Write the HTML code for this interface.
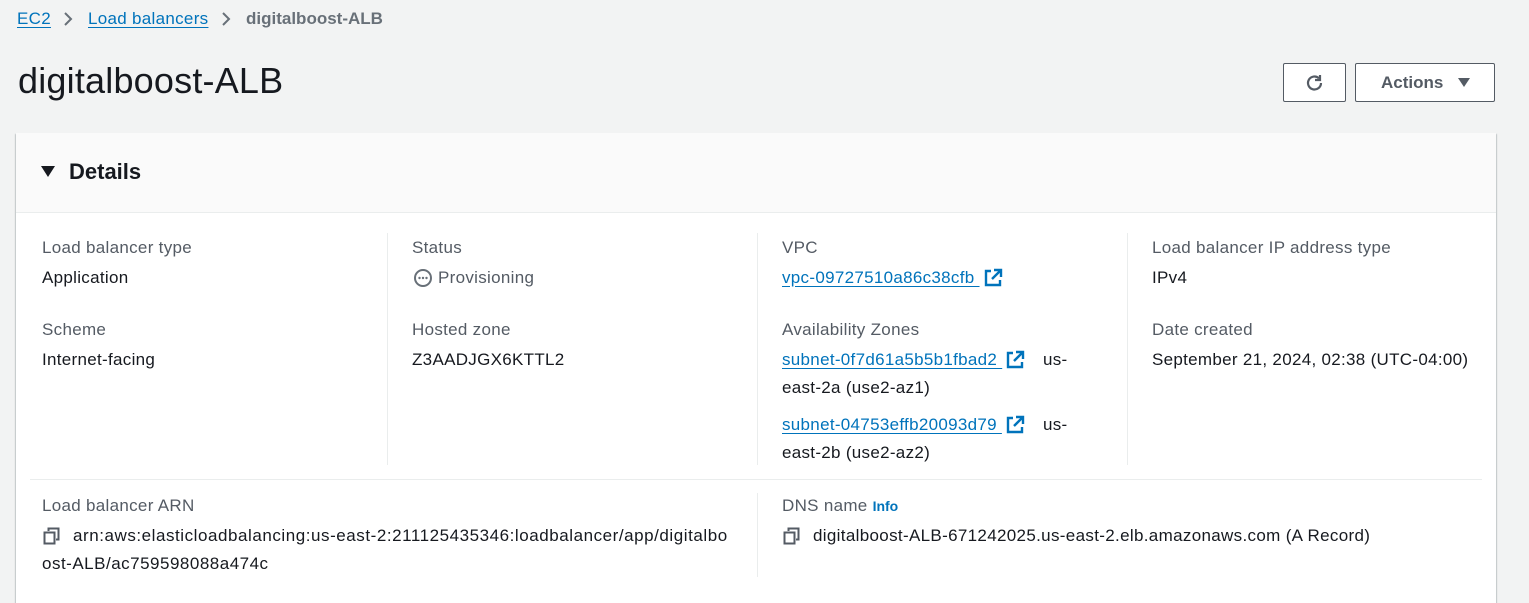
<!DOCTYPE html>
<html><head><meta charset="utf-8"><style>
*{box-sizing:border-box;margin:0;padding:0}
body{width:1529px;height:591px;overflow:hidden;background:#f2f3f3;font-family:"Liberation Sans",sans-serif;color:#16191f;position:relative;font-size:17px;letter-spacing:0.3px}
.a{position:absolute;white-space:nowrap}
.lnk{color:#0073bb;text-decoration:underline;text-underline-offset:3px}
.lbl{color:#545b64}
.vd{position:absolute;width:1px;background:#eaeded}
.btn{position:absolute;border:1px solid #545b64;border-radius:2px;background:#fff}
.ext{display:inline-block;vertical-align:-5px;margin-left:3px}
</style></head><body>
<div class="a" style="left:17px;top:9px"><span class="lnk">EC2</span></div>
<svg class="a" style="left:60px;top:10px" width="16" height="18"><path d="M5 3l6 6-6 6" stroke="#687078" stroke-width="2" fill="none"/></svg>
<div class="a" style="left:88px;top:9px"><span class="lnk">Load balancers</span></div>
<svg class="a" style="left:218px;top:10px" width="16" height="18"><path d="M5 3l6 6-6 6" stroke="#687078" stroke-width="2" fill="none"/></svg>
<div class="a" style="left:246px;top:9px;font-weight:bold;color:#687078;letter-spacing:0">digitalboost-ALB</div>
<div class="a" style="left:18px;top:60px;font-size:36px;letter-spacing:0.2px">digitalboost-ALB</div>
<div class="btn" style="left:1283px;top:63px;width:63px;height:39px"><svg style="position:absolute;left:20px;top:8px" width="22" height="22" viewBox="0 0 22 22"><path d="M17 11a6.5 6.5 0 1 1-2-4.7" stroke="#545b64" stroke-width="2.2" fill="none"/><path d="M16 3v5h-5" stroke="#545b64" stroke-width="2.2" fill="none"/></svg></div>
<div class="btn" style="left:1355px;top:63px;width:140px;height:39px"><span class="a" style="left:25px;top:9px;font-weight:bold;color:#545b64;letter-spacing:0">Actions</span><svg class="a" style="left:102px;top:14px" width="12" height="10"><path d="M0 0h12L6 9z" fill="#545b64"/></svg></div>
<div class="a" style="left:16px;top:133px;width:1480px;height:470px;background:#fff;box-shadow:0 1px 1px rgba(0,28,36,.3),1px 1px 1px rgba(0,28,36,.15),-1px 1px 1px rgba(0,28,36,.15)"></div>
<div class="a" style="left:16px;top:133px;width:1480px;height:80px;background:#fafafa;border-bottom:1px solid #eaeded"></div>
<svg class="a" style="left:41px;top:166px" width="14" height="12"><path d="M0 0h14L7 11z" fill="#16191f"/></svg>
<div class="a" style="left:69px;top:159px;font-size:22px;font-weight:bold;letter-spacing:0">Details</div>
<div class="vd" style="left:387px;top:233px;height:232px"></div>
<div class="vd" style="left:757px;top:233px;height:232px"></div>
<div class="vd" style="left:1127px;top:233px;height:232px"></div>
<div class="a" style="left:30px;top:479px;width:1452px;height:1px;background:#eaeded"></div>
<div class="vd" style="left:757px;top:493px;height:84px"></div>

<div class="a lbl" style="left:42px;top:238px">Load balancer type</div>
<div class="a" style="left:42px;top:268px">Application</div>
<div class="a lbl" style="left:42px;top:320px">Scheme</div>
<div class="a" style="left:42px;top:350px">Internet-facing</div>

<div class="a lbl" style="left:412px;top:238px">Status</div>
<svg class="a" style="left:413px;top:268px" width="20" height="20"><circle cx="10" cy="10" r="8" stroke="#687078" stroke-width="2" fill="none"/><circle cx="6.5" cy="10" r="1.2" fill="#687078"/><circle cx="10" cy="10" r="1.2" fill="#687078"/><circle cx="13.5" cy="10" r="1.2" fill="#687078"/></svg>
<div class="a lbl" style="left:438px;top:268px">Provisioning</div>
<div class="a lbl" style="left:412px;top:320px">Hosted zone</div>
<div class="a" style="left:412px;top:350px">Z3AADJGX6KTTL2</div>

<div class="a lbl" style="left:782px;top:238px">VPC</div>
<div class="a" style="left:782px;top:268px"><span class="lnk">vpc-09727510a86c38cfb&nbsp;</span><svg class="ext" width="20" height="20" viewBox="0 0 20 20"><path d="M8 3H3v14h14v-5M11 2h7v7M18 2l-9 9" stroke="#0073bb" stroke-width="2.4" fill="none"/></svg></div>
<div class="a lbl" style="left:782px;top:320px">Availability Zones</div>
<div class="a" style="left:782px;top:350px"><span class="lnk">subnet-0f7d61a5b5b1fbad2&nbsp;</span><svg class="ext" width="20" height="20" viewBox="0 0 20 20"><path d="M8 3H3v14h14v-5M11 2h7v7M18 2l-9 9" stroke="#0073bb" stroke-width="2.4" fill="none"/></svg></div>
<div class="a" style="left:1043px;top:350px">us-</div>
<div class="a" style="left:782px;top:378px">east-2a (use2-az1)</div>
<div class="a" style="left:782px;top:415px"><span class="lnk">subnet-04753effb20093d79&nbsp;</span><svg class="ext" width="20" height="20" viewBox="0 0 20 20"><path d="M8 3H3v14h14v-5M11 2h7v7M18 2l-9 9" stroke="#0073bb" stroke-width="2.4" fill="none"/></svg></div>
<div class="a" style="left:1043px;top:415px">us-</div>
<div class="a" style="left:782px;top:443px">east-2b (use2-az2)</div>

<div class="a lbl" style="left:1152px;top:238px">Load balancer IP address type</div>
<div class="a" style="left:1152px;top:268px">IPv4</div>
<div class="a lbl" style="left:1152px;top:320px">Date created</div>
<div class="a" style="left:1152px;top:350px">September 21, 2024, 02:38 (UTC-04:00)</div>

<div class="a lbl" style="left:42px;top:496px">Load balancer ARN</div>
<svg class="a" style="left:43px;top:527px" width="18" height="18"><rect x="1.5" y="5.5" width="10" height="11" fill="none" stroke="#545b64" stroke-width="2"/><path d="M5.5 4V1.5h10v11H13" fill="none" stroke="#545b64" stroke-width="2"/></svg>
<div class="a" style="left:73px;top:526px;letter-spacing:0.55px">arn:aws:elasticloadbalancing:us-east-2:211125435346:loadbalancer/app/digitalbo</div>
<div class="a" style="left:42px;top:554px;letter-spacing:0.5px">ost-ALB/ac759598088a474c</div>

<div class="a lbl" style="left:782px;top:496px">DNS name <span style="color:#0073bb;font-weight:bold;font-size:14px;letter-spacing:0">Info</span></div>
<svg class="a" style="left:783px;top:527px" width="18" height="18"><rect x="1.5" y="5.5" width="10" height="11" fill="none" stroke="#545b64" stroke-width="2"/><path d="M5.5 4V1.5h10v11H13" fill="none" stroke="#545b64" stroke-width="2"/></svg>
<div class="a" style="left:813px;top:526px;letter-spacing:0.33px">digitalboost-ALB-671242025.us-east-2.elb.amazonaws.com (A Record)</div>
</body></html>
